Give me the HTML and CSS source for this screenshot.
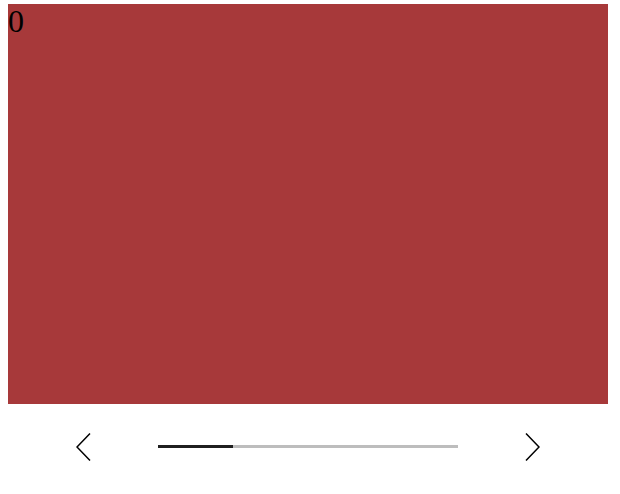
FILE: index.html
```html
<!DOCTYPE html>
<html>
<head>
<meta charset="utf-8">
<link rel="stylesheet" href="styles.css">
</head>
<body>
<div class="carousel">
  <div class="slide"><span class="num">0</span></div>
  <div class="controls">
    <button class="nav" aria-label="Previous">
      <svg width="15" height="28" viewBox="0 0 15 28"><polyline points="14,0.5 1,14 14,27.5" fill="none" stroke="#000" stroke-width="1.5"/></svg>
    </button>
    <div class="track"><div class="fill" style="width:25%"></div></div>
    <button class="nav" aria-label="Next">
      <svg width="15" height="28" viewBox="0 0 15 28"><polyline points="1,0.5 14,14 1,27.5" fill="none" stroke="#000" stroke-width="1.5"/></svg>
    </button>
  </div>
</div>
</body>
</html>
```
FILE: styles.css
```css
html, body { margin: 0; padding: 0; background: #fff; }
body { padding: 4px 8px 0; }
.carousel { width: 600px; }
.slide {
  width: 600px;
  height: 400px;
  background: #a7393a;
  color: #000;
}
.num {
  display: block;
  font-family: "Liberation Serif", serif;
  font-size: 32px;
  line-height: 34px;
}
.controls {
  height: 86px;
  display: flex;
  align-items: center;
  justify-content: center;
  gap: 67px;
}
.nav {
  border: 0;
  background: none;
  padding: 0;
  width: 15px;
  height: 28px;
  display: flex;
}
.track {
  width: 300px;
  height: 3px;
  margin-top: -2px;
  background: #bdbdbd;
  display: flex;
}
.fill { background: #1f1f1f; height: 100%; }
```
